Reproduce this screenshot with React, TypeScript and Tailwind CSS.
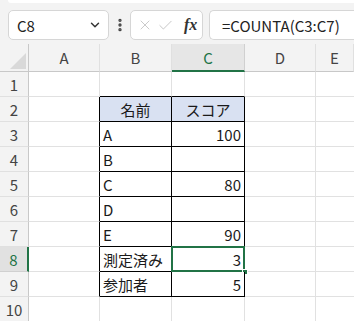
import { ChevronDown, EllipsisVertical, X, Check } from "lucide-react";

const font = { fontFamily: '"Noto Sans CJK JP", "Noto Sans", sans-serif' };

type Cell = { text?: string; align?: "left" | "right" | "center"; head?: boolean };

const rows: Cell[][] = [
  [{}, {}],
  [{ text: "名前", align: "center", head: true }, { text: "スコア", align: "center", head: true }],
  [{ text: "A" }, { text: "100", align: "right" }],
  [{ text: "B" }, {}],
  [{ text: "C" }, { text: "80", align: "right" }],
  [{ text: "D" }, {}],
  [{ text: "E" }, { text: "90", align: "right" }],
  [{ text: "測定済み" }, { text: "3", align: "right" }],
  [{ text: "参加者" }, { text: "5", align: "right" }],
  [{}, {}],
];

const alignCls = { left: "justify-start pl-[3px]", right: "justify-end pr-[3px]", center: "justify-center" };

function TableCell({ cell, r, col }: { cell: Cell; r: number; col: "B" | "C" }) {
  const inTable = r >= 2 && r <= 9;
  const aboveTable = r === 1;
  const right = inTable || (col === "B" && false) ? "border-r-black" : "border-r-[#e1e1e1]";
  const bottom = inTable || aboveTable ? "border-b-black" : "border-b-[#e1e1e1]";
  const bg = cell.head ? "bg-[#d9e1f2]" : "bg-white";
  const selected = col === "C" && r === 8;
  return (
    <div className={`relative flex items-center h-[25px] border-r border-b text-[15px] text-[#1a1a1a] ${right} ${bottom} ${bg} ${alignCls[cell.align ?? "left"]}`}>
      <span className="leading-none">{cell.text}</span>
      {selected && (
        <>
          <div className="absolute -left-px -top-px -right-px -bottom-px border-2 border-[#217346] pointer-events-none" />
          <div className="absolute -right-[4px] -bottom-[4px] w-[6px] h-[6px] bg-[#217346] border border-white" />
        </>
      )}
    </div>
  );
}

export default function App() {
  return (
    <div className="w-[354px] h-[321px] overflow-hidden bg-white" style={font}>
      {/* Formula bar */}
      <div className="relative h-[44px] bg-[#f3f3f3] flex items-center pl-[8px] pt-[6px]">
        <div className="absolute top-0 left-[8px] right-0 h-[3px] bg-white rounded-bl-md" />
        <div className="w-[101px] h-[30px] bg-white border border-[#d6d6d6] rounded-[5px] flex items-center justify-between pl-[8px] pr-[6px]">
          <span className="text-[15px] text-[#222] leading-none">C8</span>
          <ChevronDown size={14} strokeWidth={2.5} className="text-[#333]" />
        </div>
        <div className="w-[21px] flex justify-center">
          <EllipsisVertical size={16} strokeWidth={3} className="text-[#444]" />
        </div>
        <div className="w-[73px] h-[30px] bg-white border border-[#d6d6d6] rounded-[5px] flex items-center pl-[6px] gap-[4px]">
          <X size={16} strokeWidth={1.2} className="text-[#bdbdbd]" />
          <Check size={17} strokeWidth={1.2} className="text-[#bdbdbd]" />
          <span className="ml-[6px] text-[16px] italic font-bold text-[#333] leading-none" style={{ fontFamily: '"Liberation Serif", serif' }}>fx</span>
        </div>
        <div className="ml-[6px] flex-1 h-[30px] bg-white border border-[#d6d6d6] rounded-l-[5px] border-r-0 flex items-center pl-[12px]">
          <span className="text-[15px] text-[#222] leading-none whitespace-nowrap">=COUNTA(C3:C7)</span>
        </div>
      </div>

      {/* Sheet */}
      <div className="grid grid-cols-[29px_71px_72px_73px_71px_1fr]">
        {/* Column headers */}
        <div className="h-[28px] bg-[#f3f3f3] border-r border-b border-[#c8c8c8] flex items-end justify-end p-[2px]">
          <div className="w-0 h-0 border-l-[16px] border-l-transparent border-b-[16px] border-b-[#d9d9d9]" />
        </div>
        {["A", "B", "C", "D", "E"].map((c) => (
          <div
            key={c}
            className={`h-[28px] flex items-center justify-center text-[15px] leading-none ${
              c === "C"
                ? "bg-[#e6e6e6] border-b-2 border-b-[#217346] text-[#217346] border-r border-r-[#d0d0d0]"
                : "bg-[#f3f3f3] border-b border-b-[#c8c8c8] text-[#444] border-r border-r-[#e0e0e0]"
            }`}
          >
            {c}
          </div>
        ))}

        {rows.map((row, i) => {
          const r = i + 1;
          const sel = r === 8;
          return (
            <div key={r} className="contents">
              <div
                className={`h-[25px] flex items-center justify-center text-[15px] leading-none border-b ${
                  sel
                    ? "bg-[#e1e1e1] text-[#217346] border-r-2 border-r-[#217346] border-b-[#d0d0d0]"
                    : "bg-[#f3f3f3] text-[#444] border-r border-r-[#c8c8c8] border-b-[#e0e0e0]"
                }`}
              >
                {r}
              </div>
              <div
                className={`h-[25px] border-b ${r === 1 ? "" : ""} ${
                  r >= 2 && r <= 9 ? "border-r border-r-black" : "border-r border-r-[#e1e1e1]"
                } border-b-[#e1e1e1]`}
              />
              <TableCell cell={row[0]} r={r} col="B" />
              <TableCell cell={row[1]} r={r} col="C" />
              <div className="h-[25px] border-r border-b border-[#e1e1e1]" />
              <div className="h-[25px] border-b border-[#e1e1e1]" />
            </div>
          );
        })}
      </div>
    </div>
  );
}
